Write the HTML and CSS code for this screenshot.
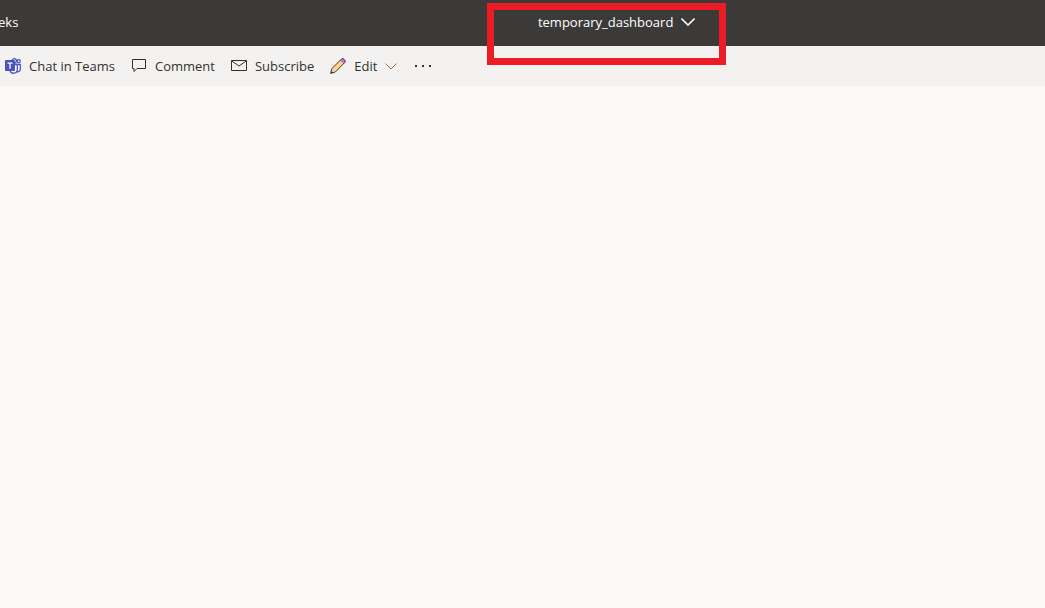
FILE: index.html
```
<!DOCTYPE html>
<html lang="en">

<head>
    <meta charset="utf-8">
    <title>temporary_dashboard</title>
    <link rel="stylesheet" href="styles.css">
</head>

<body>
    <header class="topbar">
        <a class="breadcrumb" href="#">eks</a>
        <div class="title-area">
            <button class="title" type="button">
                temporary_dashboard
                <svg width="14" height="8" viewBox="0 0 14 8" fill="none" stroke="currentColor" stroke-width="1.5">
                    <path d="M.5 .6 7 7.1 13.5 .6" />
                </svg>
            </button>
            <div class="marker"></div>
        </div>
    </header>

    <nav class="toolbar">
        <button class="tool" type="button">
            <svg width="16" height="16" viewBox="0 0 16 16" stroke-width="1.3">
                <path d="M10 6.500h5.300v4.700a2.500 2.500 0 0 1-3.300 2.400" fill="#fff" stroke="#4b53bc" />
                <path d="M5 6.500h7.300v5a3.700 3.700 0 0 1-7.300.9z" fill="#fff" stroke="#4b53bc" />
                <circle cx="9.200" cy="2.900" r="2.200" fill="#fff" stroke="#4b53bc" />
                <circle cx="13.700" cy="3.200" r="1.500" fill="#fff" stroke="#4b53bc" />
                <rect y="2" width="10" height="11" rx="1" fill="#4b53bc" />
                <path d="M2.500 5.200h5M5 5.200v5.600" stroke="#fff" />
            </svg>
            Chat in Teams
        </button>
        <button class="tool" type="button">
            <svg width="16" height="16" viewBox="0 0 16 16" fill="none" stroke="#323130">
                <path d="M1.500 1.500h13v9h-8.500l-3 3v-3h-1.500z" />
            </svg>
            Comment
        </button>
        <button class="tool" type="button">
            <svg width="16" height="16" viewBox="0 0 16 16" fill="none" stroke="#323130">
                <path d="M.5 2.500h15v10h-15z" />
                <path d="M.8 3 8 8l7.200-5" />
            </svg>
            Subscribe
        </button>
        <button class="tool" type="button">
            <svg width="16" height="16" viewBox="0 0 16 16" stroke-linejoin="round">
                <path d="M1.700 10.800 11.600.9Q12.800 0 14.200 1.400T15.100 4.200L5.200 14.100.7 15.400z" fill="#ffd58a" />
                <path d="M10 2.500 11.600.9Q12.800 0 14.200 1.400T15.100 4.200L13.500 5.900z" fill="#c27bcf" />
                <path d="M1.700 10.800 5.200 14.100.7 15.400z" fill="#d8d2cc" />
                <path d="M1.700 10.800 11.600.9Q12.800 0 14.200 1.400T15.100 4.200L5.200 14.100.7 15.400z" fill="none" stroke="#3b3a39" />
                <path d="M1.200 13.300.7 15.400 2.800 14.800z" fill="#3b3a39" />
            </svg>
            Edit
            <svg width="12" height="7" viewBox="0 0 12 7" fill="none" stroke="#a3724c">
                <path d="M.5 .5 6 6 11.500 .5" />
            </svg>
        </button>
        <button class="tool more" type="button" aria-label="More options">
            <svg width="16" height="16" viewBox="0 0 16 16" fill="#323130">
                <path d="M0 7h2v2H0zM7 7h2v2H7zM14 7h2v2h-2z" />
            </svg>
        </button>
    </nav>

    <main class="canvas"></main>
</body>

</html>
```
FILE: styles.css
```
body {
    margin: 0;
    min-height: 100vh;
    display: flex;
    flex-direction: column;
    background: #faf9f8;
    color: #323130;
    font-family: "Segoe UI", "Open Sans", "Noto Sans", sans-serif;
    font-size: 13px;
    line-height: 20px
}

button {
    display: flex;
    align-items: center;
    gap: 8px;
    padding: 0;
    border: 0;
    background: none;
    color: inherit;
    font: inherit;
    white-space: nowrap;
    cursor: pointer
}

svg {
    flex: none
}

.topbar {
    display: grid;
    grid-template-columns: 51% 1fr;
    align-items: center;
    height: 44px;
    padding-bottom: 2px;
    background: #3b3a39;
    color: #fff
}

.breadcrumb {
    margin-left: -2px;
    color: #fff;
    text-decoration: none
}

.title-area {
    position: relative;
    padding-left: 5px
}

/* red box drawn over the title */
.marker {
    position: absolute;
    top: -9px;
    left: -46px;
    width: 225px;
    height: 48px;
    border: 7px solid #ed1c24;
    pointer-events: none
}

.toolbar {
    display: flex;
    align-items: center;
    gap: 16px;
    height: 40px;
    padding-left: 5px;
    background: #f3f2f1
}

.more {
    margin-left: 2px
}

.canvas {
    flex: 1
}
```
